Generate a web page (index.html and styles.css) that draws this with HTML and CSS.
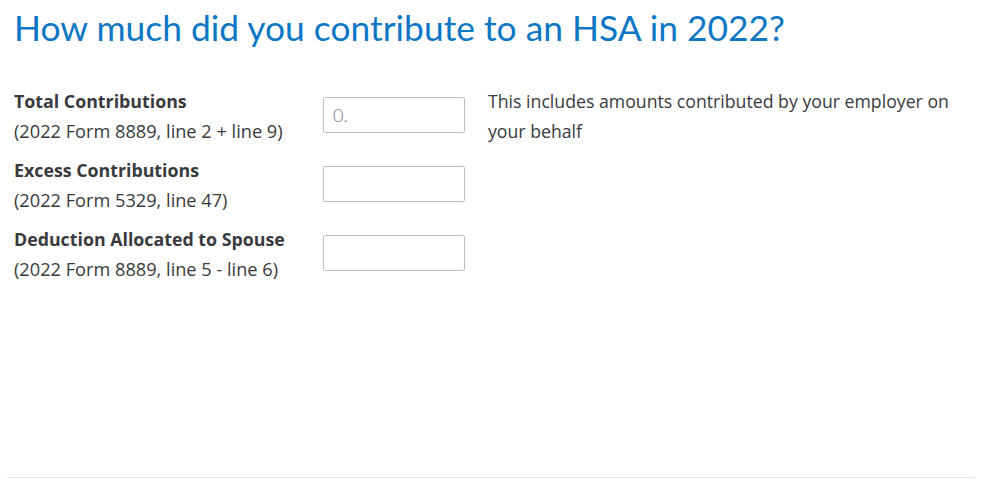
FILE: index.html
```html
<!DOCTYPE html>
<html lang="en">

<head>
    <meta charset="UTF-8">
    <meta name="viewport" content="width=device-width, initial-scale=1.0">
    <title>HSA Contributions</title>
    <link rel="stylesheet" href="styles.css">
</head>

<body>
    <div class="page">
        <h1 class="title">How much did you contribute to an HSA in 2022?</h1>

        <div class="form">
            <div class="label">
                <strong>Total Contributions</strong>
                <span>(2022 Form 8889, line 2 + line 9)</span>
            </div>
            <input type="text" class="field" placeholder="0.">
            <p class="help">This includes amounts contributed by your employer on your behalf</p>

            <div class="label">
                <strong>Excess Contributions</strong>
                <span>(2022 Form 5329, line 47)</span>
            </div>
            <input type="text" class="field">
            <div></div>

            <div class="label">
                <strong>Deduction Allocated to Spouse</strong>
                <span>(2022 Form 8889, line 5 - line 6)</span>
            </div>
            <input type="text" class="field">
            <div></div>
        </div>

        <hr class="divider">
    </div>
</body>

</html>
```

FILE: styles.css
```css
body {
    margin: 0;
    background: #ffffff;
    color: #393a3d;
    font-family: 'Open Sans', 'Noto Sans', sans-serif;
}

.page {
    padding: 8px 23px 0 14px;
    height: 502px;
    box-sizing: border-box;
    display: flex;
    flex-direction: column;
}

.title {
    margin: 0;
    font-family: 'Lato', sans-serif;
    font-size: 35.4px;
    font-weight: 400;
    color: #0d77c5;
    line-height: 40px;
}

.form {
    margin-top: 38px;
    display: grid;
    grid-template-columns: 286px 142px 1fr;
    column-gap: 23px;
    row-gap: 9px;
    align-items: start;
}

.label {
    display: flex;
    flex-direction: column;
    font-size: 18.2px;
    line-height: 30px;
}

.label strong {
    font-size: 17.8px;
    font-weight: 700;
}

.field {
    margin-top: 11px;
    width: 142px;
    height: 36px;
    box-sizing: border-box;
    border: 1px solid #babec5;
    border-radius: 2px;
    padding: 0 9px;
    font-family: 'Lato', sans-serif;
    font-size: 18px;
    font-weight: 300;
    color: #393a3d;
}

.field::placeholder {
    color: #77797e;
}

.help {
    margin: 0;
    font-size: 17.7px;
    line-height: 30px;
}

.divider {
    margin: auto 0 24px -7px;
    border: none;
    border-top: 1px solid #e3e4e6;
}
```
